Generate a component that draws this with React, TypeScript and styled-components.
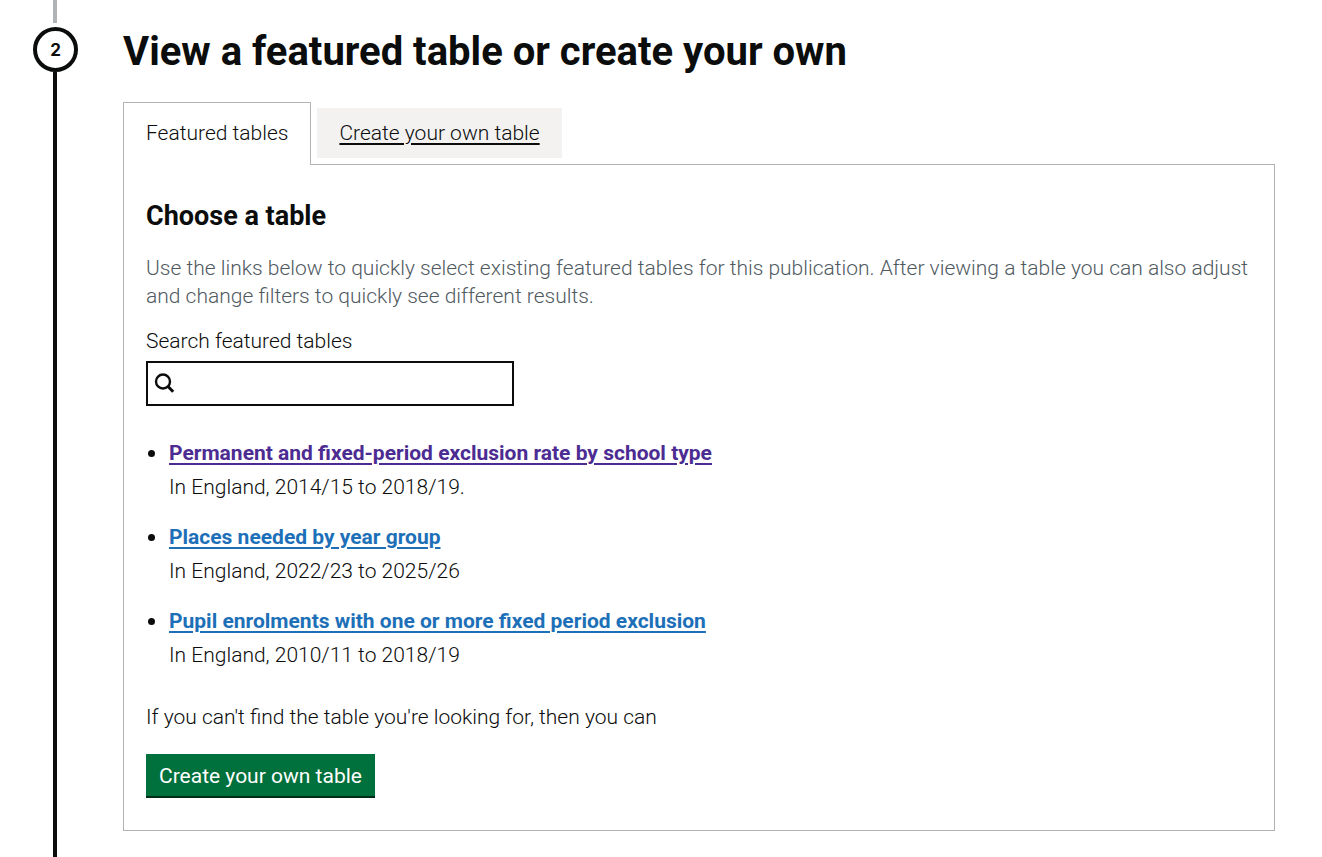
import React, { useState } from "react";
import styled, { createGlobalStyle } from "styled-components";

const ink = "#0b0c0c";
const line = "#b1b4b6";

const GlobalStyle = createGlobalStyle`
  *, *::before, *::after { box-sizing: border-box; }
  body {
    margin: 0;
    background: #fff;
    color: ${ink};
    font-family: Roboto, "Noto Sans", sans-serif;
    font-size: 21px;
    font-weight: 300;
    line-height: 28px;
  }
`;

const Steps = styled.ol`
  list-style: none;
  margin: 0;
  padding: 0 47px 0 33px;
`;

const Step = styled.li`
  display: grid;
  grid-template-columns: 45px minmax(0, 1fr);
  column-gap: 45px;
  min-height: 100vh;
`;

const Rail = styled.div`
  display: flex;
  flex-direction: column;
`;

const PreviousLine = styled.div`
  width: 4px;
  height: 23px;
  margin: 0 0 4px 20px;
  background: ${line};
`;

const StepNumber = styled.span`
  display: flex;
  align-items: center;
  justify-content: center;
  width: 45px;
  height: 45px;
  border: 4px solid ${ink};
  border-radius: 50%;
  font-family: Inter, sans-serif;
  font-size: 17px;
  font-weight: 700;
`;

const CurrentLine = styled.div`
  flex: 1;
  width: 4px;
  margin-left: 20px;
  background: ${ink};
`;

const Content = styled.div`
  padding: 28px 0 26px;
`;

const Title = styled.h1`
  margin: 0 0 26px;
  font-size: 40px;
  line-height: 48px;
  font-weight: 700;
`;

const TabList = styled.div`
  display: flex;
  align-items: center;
  gap: 6px;
`;

const Tab = styled.button<{ $selected: boolean }>`
  height: ${(p) => (p.$selected ? "63px" : "50px")};
  margin-bottom: ${(p) => (p.$selected ? "-1px" : "0")};
  padding: ${(p) => (p.$selected ? "0 22px 2px" : "0 22px")};
  border: ${(p) => (p.$selected ? `1px solid ${line}` : "0")};
  border-bottom: 0;
  background: ${(p) => (p.$selected ? "#fff" : "#f3f2f1")};
  color: ${ink};
  font: inherit;
  text-decoration: ${(p) => (p.$selected ? "none" : "underline")};
  text-decoration-thickness: 2px;
  text-underline-offset: 3px;
  cursor: pointer;
`;

const Panel = styled.section`
  padding: 34px 22px 32px;
  border: 1px solid ${line};
`;

const Heading = styled.h2`
  margin: 0 0 21px;
  font-size: 27px;
  line-height: 34px;
  font-weight: 700;
`;

const Hint = styled.p`
  margin: 0 0 17px;
  color: #505a5f;
`;

const Label = styled.label`
  display: block;
  margin-bottom: 6px;
`;

const SearchBox = styled.div`
  display: flex;
  align-items: center;
  max-width: 368px;
  height: 45px;
  padding-left: 6px;
  border: 2px solid ${ink};
`;

const SearchInput = styled.input`
  flex: 1;
  min-width: 0;
  height: 100%;
  padding: 0 6px;
  border: 0;
  outline: 0;
  background: transparent;
  font: inherit;
`;

const TableList = styled.ul`
  display: flex;
  flex-direction: column;
  gap: 21px;
  margin: 32px 0 34px;
  padding-left: 23px;
  list-style: disc;

  li::marker {
    font-size: 24px;
  }
`;

const TableLink = styled.a<{ $visited?: boolean }>`
  color: ${(p) => (p.$visited ? "#4c2c92" : "#1d70b8")};
  font-weight: 700;
  text-decoration-thickness: 2px;
  text-underline-offset: 3px;
`;

const Description = styled.p`
  margin: 6px 0 0;
`;

const Prompt = styled.p`
  margin: 0 0 23px;
`;

const PrimaryButton = styled.button`
  display: block;
  height: 42px;
  margin-bottom: 2px;
  padding: 2px 13px 0;
  border: 0;
  background: #00703c;
  box-shadow: 0 2px 0 #002d18;
  color: #fff;
  font: inherit;
  font-weight: 400;
  cursor: pointer;
`;

const tables = [
  { name: "Permanent and fixed-period exclusion rate by school type", text: "In England, 2014/15 to 2018/19.", visited: true },
  { name: "Places needed by year group", text: "In England, 2022/23 to 2025/26" },
  { name: "Pupil enrolments with one or more fixed period exclusion", text: "In England, 2010/11 to 2018/19" },
];

export default function App() {
  const [query, setQuery] = useState("");
  const shown = tables.filter((t) => t.name.toLowerCase().includes(query.toLowerCase()));

  return (
    <>
      <GlobalStyle />
      <Steps>
        <Step>
          <Rail>
            <PreviousLine />
            <StepNumber>2</StepNumber>
            <CurrentLine />
          </Rail>
          <Content>
            <Title>View a featured table or create your own</Title>
            <TabList role="tablist">
              <Tab type="button" role="tab" aria-selected="true" aria-controls="featured" $selected>
                Featured tables
              </Tab>
              <Tab type="button" role="tab" aria-selected="false" $selected={false}>
                Create your own table
              </Tab>
            </TabList>
            <Panel id="featured" role="tabpanel">
              <Heading>Choose a table</Heading>
              <Hint>
                Use the links below to quickly select existing featured tables for this publication. After viewing a
                table you can also adjust and change filters to quickly see different results.
              </Hint>
              <Label htmlFor="search">Search featured tables</Label>
              <SearchBox>
                <svg width="21" height="21" viewBox="0 0 21 21" fill="none" stroke={ink} aria-hidden="true">
                  <circle cx="9" cy="8.5" r="7" strokeWidth="2.4" />
                  <path d="M14 13.5l5.2 5.2" strokeWidth="3" />
                </svg>
                <SearchInput id="search" value={query} onChange={(e) => setQuery(e.target.value)} />
              </SearchBox>
              <TableList>
                {shown.map((t) => (
                  <li key={t.name}>
                    <TableLink href="#table" $visited={t.visited}>
                      {t.name}
                    </TableLink>
                    <Description>{t.text}</Description>
                  </li>
                ))}
              </TableList>
              <Prompt>If you can't find the table you're looking for, then you can</Prompt>
              <PrimaryButton type="button">Create your own table</PrimaryButton>
            </Panel>
          </Content>
        </Step>
      </Steps>
    </>
  );
}
